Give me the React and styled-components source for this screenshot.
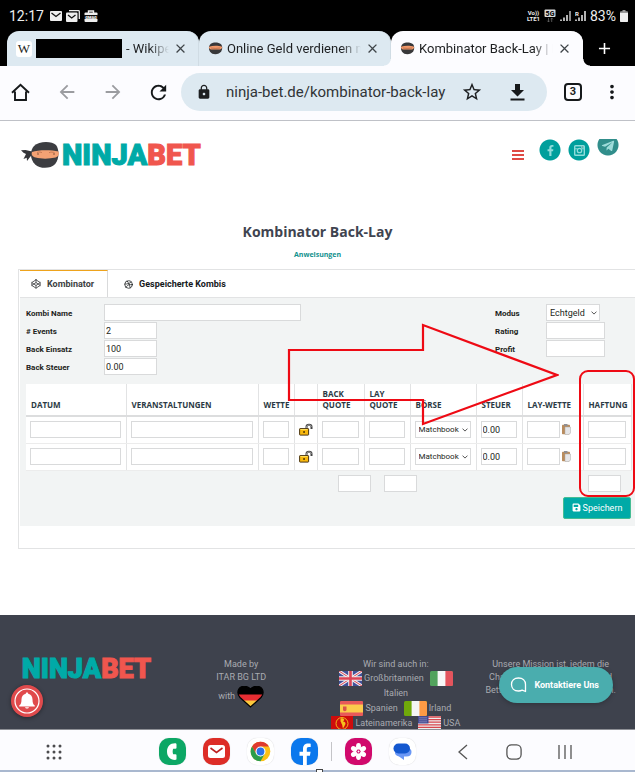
import { useState } from 'react';
import styled, { createGlobalStyle } from 'styled-components';
import { FaFacebookF, FaSave, FaTelegramPlane } from 'react-icons/fa';
import { FiCodepen, FiDribbble } from 'react-icons/fi';
import {
  MdAdd,
  MdArrowBack,
  MdArrowForward,
  MdClose,
  MdLock,
  MdMoreVert,
  MdRefresh,
  MdStarBorder,
} from 'react-icons/md';

const colors = {
  teal: '#00aaa7',
  coral: '#f0564e',
  ink: '#3f4450',
  border: '#d9dadb',
  surface: '#f2f4f4',
  tab: '#dde9f1',
  red: '#ee0a14',
};

const COLUMNS = [
  { label: 'Datum', width: 100 },
  { label: 'Veranstaltungen', width: 132 },
  { label: 'Wette', width: 36 },
  { label: '', width: 23 },
  { label: 'Back Quote', width: 47 },
  { label: 'Lay Quote', width: 46 },
  { label: 'Börse', width: 66 },
  { label: 'Steuer', width: 46 },
  { label: 'Lay-Wette', width: 61 },
  { label: 'Haftung', width: 48 },
];

export default function App() {
  return (
    <>
      <GlobalStyle />
      <Screen>
        <StatusBar />
        <BrowserTabs />
        <AddressBar />
        <Main>
          <SiteHeader />
          <Title>Kombinator Back-Lay</Title>
          <Instructions href="#anweisungen">Anweisungen</Instructions>
          <Calculator />
        </Main>
        <SiteFooter />
        <SystemDock />
      </Screen>
    </>
  );
}

function StatusBar() {
  return (
    <Status>
      <Clock>12:17</Clock>
      <StatusIcons>
        <svg width="12" height="10" viewBox="0 0 12 10">
          <rect width="12" height="10" rx="1" fill="#eee" />
          <path d="M1.5 2 6 5.5 10.5 2" fill="none" stroke="#111" strokeWidth="1.3" />
        </svg>
        <svg width="14" height="12" viewBox="0 0 14 12">
          <path d="M3 .7h9.5a.8.8 0 0 1 .8.8V9" fill="none" stroke="#eee" strokeWidth="1.3" />
          <rect y="2.5" width="11.5" height="9.5" rx="1" fill="#eee" />
          <path d="m2 5 3.7 3L9.5 5" fill="none" stroke="#111" strokeWidth="1.3" />
        </svg>
        <svg width="14" height="12" viewBox="0 0 14 12">
          <path d="M4.5 3V1h5v2" fill="none" stroke="#eee" strokeWidth="1.4" />
          <rect x=".5" y="2.5" width="13" height="9.5" rx="1" fill="#eee" />
          <path d="M0 5h14v4H0z" fill="#111" />
          <text x="7" y="8.6" textAnchor="middle" fontSize="4" fontWeight="900" fill="#fff">GMAG</text>
        </svg>
      </StatusIcons>
      <StatusRight>
        <Carrier>
          <span>Vo))</span>
          <span>LTE1</span>
        </Carrier>
        <svg width="12" height="14" viewBox="0 0 12 14">
          <rect x=".5" y=".5" width="11" height="7.500" rx="1" fill="#ddd" />
          <text x="6" y="7" textAnchor="middle" fontSize="7" fontWeight="900" fill="#111">5G</text>
          <path d="M4.500 9v4M3.300 11.700 4.500 13l1.200-1.300M7.700 13V9M6.500 10.300 7.700 9l1.200 1.300" fill="none" stroke="#666" strokeWidth=".8" />
        </svg>
        <Signal />
        <Signal roaming />
        <span>83%</span>
        <svg width="8" height="12" viewBox="0 0 8 12">
          <path d="M2.500 0h3v1.300H7a1 1 0 0 1 1 1V11a1 1 0 0 1-1 1H1a1 1 0 0 1-1-1V2.300a1 1 0 0 1 1-1h1.500z" fill="#999" />
          <path d="M0 3h8v8a1 1 0 0 1-1 1H1a1 1 0 0 1-1-1z" fill="#eee" />
        </svg>
      </StatusRight>
    </Status>
  );
}

function Signal({ roaming }) {
  return (
    <svg width="11" height="12" viewBox="0 0 11 12">
      <path d="M1 9.500V11M4 7.500V11M7 5V11" stroke="#eee" strokeWidth="1.500" />
      <path d="M10 1v10" stroke={roaming ? '#eee' : '#bbb'} strokeWidth="1.500" />
      {roaming && <text x="0" y="5.500" fontSize="6" fontWeight="700" fill="#eee">R</text>}
    </svg>
  );
}

function BrowserTabs() {
  return (
    <TabStrip>
      <BrowserTab>
        <WikiIcon>W</WikiIcon>
        <Redacted />
        <TabText>- Wikipedia</TabText>
        <TabClose aria-label="Tab schließen">
          <MdClose size={15} />
        </TabClose>
      </BrowserTab>
      <BrowserTab>
        <NinjaFavicon />
        <TabText>Online Geld verdienen mit</TabText>
        <TabClose aria-label="Tab schließen">
          <MdClose size={15} />
        </TabClose>
      </BrowserTab>
      <BrowserTab $active>
        <NinjaFavicon />
        <TabText>Kombinator Back-Lay | Ninja</TabText>
        <TabClose aria-label="Tab schließen">
          <MdClose size={15} />
        </TabClose>
      </BrowserTab>
      <NewTab aria-label="Neuer Tab">
        <MdAdd size={19} />
      </NewTab>
    </TabStrip>
  );
}

function NinjaFavicon() {
  return (
    <svg width="15" height="13" viewBox="0 0 16 13">
      <path d="M3 1.500C6-.4 11-.3 14 2c1.500 2 1.500 5 .2 7.500-2.500 4-9.500 4.300-12 .5C.6 7.500.3 4 3 1.500z" fill="#38383a" />
      <path d="M1 4.500C5 3.300 11 3.300 15 4.500c.5 2-1.500 3-3.500 3h-7C2.500 7.500.5 6.500 1 4.500z" fill="#f39a6b" />
      <path d="M3 6c3 .5 7 .5 10 0" stroke="#a55f40" strokeWidth=".7" fill="none" />
    </svg>
  );
}

function AddressBar() {
  return (
    <Toolbar>
      <ToolButton aria-label="Startseite">
        <svg width="19" height="19" viewBox="0 0 19 19">
          <path d="M4 8.500V17h11V8.500M1 9.800 9.500 1.700 18 9.800" fill="none" stroke="#16191b" strokeWidth="1.900" />
        </svg>
      </ToolButton>
      <ToolButton aria-label="Zurück" $muted>
        <MdArrowBack size={22} />
      </ToolButton>
      <ToolButton aria-label="Vor" $muted>
        <MdArrowForward size={22} />
      </ToolButton>
      <ToolButton aria-label="Neu laden">
        <MdRefresh size={23} />
      </ToolButton>
      <Omnibox>
        <MdLock size={16} />
        <Url aria-label="Adresse" defaultValue="ninja-bet.de/kombinator-back-lay" />
        <OmniButton aria-label="Lesezeichen">
          <MdStarBorder size={22} />
        </OmniButton>
        <OmniButton aria-label="Herunterladen">
          <svg width="15" height="17" viewBox="0 0 15 17">
            <path d="M5 0h5v6h4L7.500 12.500 1 6h4zM.5 14.500h14v2H.5z" fill="#16191b" />
          </svg>
        </OmniButton>
      </Omnibox>
      <TabCount aria-label="Offene Tabs">3</TabCount>
      <ToolButton aria-label="Menü">
        <MdMoreVert size={22} />
      </ToolButton>
    </Toolbar>
  );
}

function SiteHeader() {
  return (
    <Header>
      <Brand href="#start">
        <svg width="40" height="28" viewBox="0 0 40 28">
          <path d="M12 10.500 5.500 9 1 9.300l2.500 2.500L6 13l-2.500 5 3.200-1.200L7 20l5-6.500z" fill="#343539" />
          <path d="M14 5C19-.2 32-.1 36 4c3.600 5 3.200 14-.8 19-5 5.300-15.500 4.800-20 .5C9.500 18 10 9.500 14 5z" fill="#3c3d41" />
          <path d="M12 11c6-2.300 19-2.400 26.500-.4 1 2.600 0 5-2.800 6-6.700 1.500-14.700 1.500-20 0C12.500 15.700 11 13.500 12 11z" fill="#f4a274" />
          <path d="M17 11.500c2-.8 4-.5 5 .2M29 11.700c1.500-.8 4-.7 5.500 0" stroke="#c77b55" fill="none" />
          <circle cx="18" cy="13" r=".8" fill="#7a4d38" />
          <circle cx="34" cy="13" r=".8" fill="#7a4d38" />
        </svg>
        <Wordmark>
          NINJA<em>BET</em>
        </Wordmark>
      </Brand>
      <MenuButton aria-label="Navigation">
        <svg width="12" height="10" viewBox="0 0 12 10">
          <path d="M0 1h12M0 5h12M0 9h12" stroke="#df4a44" strokeWidth="2" />
        </svg>
      </MenuButton>
      <Socials>
        <Social href="#facebook" aria-label="Facebook">
          <FaFacebookF size={11} />
        </Social>
        <Social href="#instagram" aria-label="Instagram">
          <svg width="11" height="11" viewBox="0 0 11 11">
            <rect x=".7" y=".7" width="9.600" height="9.600" rx=".8" fill="none" stroke="currentColor" strokeWidth="1.400" />
            <path d="M1 3.800h2.500M7.500 3.800H10M7.600 1.200h1.800v1.600H7.600z" stroke="currentColor" />
            <circle cx="5.500" cy="5.500" r="2.200" fill="none" stroke="currentColor" strokeWidth="1.300" />
          </svg>
        </Social>
        <Social href="#telegram" aria-label="Telegram" $cut>
          <FaTelegramPlane size={14} />
        </Social>
      </Socials>
    </Header>
  );
}

function Calculator() {
  const [tab, setTab] = useState('kombinator');

  return (
    <Panel>
      <PanelTabs role="tablist">
        <PanelTab
          role="tab"
          aria-selected={tab === 'kombinator'}
          $active={tab === 'kombinator'}
          onClick={() => setTab('kombinator')}
        >
          <FiCodepen size={10} /> Kombinator
        </PanelTab>
        <PanelTab
          role="tab"
          aria-selected={tab === 'kombis'}
          $active={tab === 'kombis'}
          onClick={() => setTab('kombis')}
        >
          <FiDribbble size={9} /> Gespeicherte Kombis
        </PanelTab>
      </PanelTabs>
      <PanelBody>
        <Settings>
          <Fields>
            <label htmlFor="name">Kombi Name</label>
            <Field id="name" $width={197} />
            <label htmlFor="events"># Events</label>
            <Field id="events" $width={53} defaultValue="2" />
            <label htmlFor="einsatz">Back Einsatz</label>
            <Field id="einsatz" $width={53} defaultValue="100" />
            <label htmlFor="steuer">Back Steuer</label>
            <Field id="steuer" $width={53} defaultValue="0.00" />
          </Fields>
          <Fields $compact>
            <label htmlFor="modus">Modus</label>
            <SelectBox $width={54}>
              <select id="modus" defaultValue="Echtgeld">
                <option>Echtgeld</option>
              </select>
              <Chevron />
            </SelectBox>
            <label htmlFor="rating">Rating</label>
            <Field id="rating" $width={59} />
            <label htmlFor="profit">Profit</label>
            <Field id="profit" $width={59} />
          </Fields>
        </Settings>
        <BetTable>
          <colgroup>
            {COLUMNS.map((col, i) => (
              <col key={i} width={col.width} />
            ))}
          </colgroup>
          <thead>
            <tr>
              {COLUMNS.map((col, i) => (
                <th key={i} scope="col">{col.label}</th>
              ))}
            </tr>
          </thead>
          <tbody>
            <BetRow number={1} />
            <BetRow number={2} />
          </tbody>
        </BetTable>
        <Totals>
          <Field aria-label="Back Quote gesamt" $width={33} />
          <Field aria-label="Lay Quote gesamt" $width={33} />
          <Field aria-label="Haftung gesamt" $width={33} />
        </Totals>
        <Actions>
          <SaveButton>
            <FaSave size={9} /> Speichern
          </SaveButton>
        </Actions>
      </PanelBody>
      <Arrow width="272" height="104" viewBox="0 0 272 104">
        <path d="M2 27h134V2l134 50-134 49V77H2z" fill="none" stroke={colors.red} strokeWidth="2.200" />
      </Arrow>
      <Highlight />
    </Panel>
  );
}

function BetRow({ number }) {
  return (
    <tr>
      <td><Field aria-label={`Datum ${number}`} /></td>
      <td><Field aria-label={`Veranstaltung ${number}`} /></td>
      <td><Field aria-label={`Wette ${number}`} /></td>
      <td>
        <IconButton aria-label={`Wette ${number} sperren`}>
          <svg width="14" height="13" viewBox="0 0 14 13">
            <path d="M7.500 6V3.800C7.500 1 12.500 1 12.500 3.800V6" fill="none" stroke="#444" strokeWidth="2" />
            <path d="M7.600 5V3.800C7.800 1.400 12.300 1.400 12.400 3.800" fill="none" stroke="#b8b8b8" strokeWidth=".8" />
            <rect x=".6" y="5.600" width="9" height="6.500" rx=".5" fill="#f8b80e" stroke="#4a3513" strokeWidth="1" />
            <path d="M1.500 6.500h7" stroke="#ffe05a" />
            <rect x="4.300" y="8" width="1.500" height="2" fill="#553800" />
          </svg>
        </IconButton>
      </td>
      <td><Field aria-label={`Back Quote ${number}`} /></td>
      <td><Field aria-label={`Lay Quote ${number}`} /></td>
      <td>
        <SelectBox $small>
          <select aria-label={`Börse ${number}`} defaultValue="Matchbook">
            <option>Matchbook</option>
          </select>
          <Chevron />
        </SelectBox>
      </td>
      <td><Field aria-label={`Steuer ${number}`} defaultValue="0.00" /></td>
      <td>
        <LayCell>
          <Field aria-label={`Lay-Wette ${number}`} $width={33} />
          <IconButton aria-label={`Lay-Wette ${number} kopieren`}>
            <svg width="9" height="11" viewBox="0 0 9 11">
              <rect y=".7" width="8" height="9.500" rx=".7" fill="#b98c5e" />
              <rect x="2" width="3.500" height="2" fill="#8f8f93" />
              <path d="M3 3h5.500v6l-1.500 1.500H3z" fill="#e6e6e8" stroke="#aaa" strokeWidth=".5" />
            </svg>
          </IconButton>
        </LayCell>
      </td>
      <td><Field aria-label={`Haftung ${number}`} /></td>
    </tr>
  );
}

function Chevron() {
  return (
    <svg width="6" height="4" viewBox="0 0 6 4">
      <path d="m.5.600 2.500 2.500L5.500.600" fill="none" stroke="#555" />
    </svg>
  );
}

function SiteFooter() {
  return (
    <Footer>
      <FooterGrid>
        <Wordmark $footer>
          NINJA<em>BET</em>
        </Wordmark>
        <FooterText>
          Made by
          <br />
          ITAR BG LTD
          <MadeWith>
            with
            <svg width="27" height="22" viewBox="0 0 27 22">
              <clipPath id="heart">
                <path d="M13.500 3C10-.7 4-.6 1.800 3 .2 6 .9 9 3 11.500L13.500 21 24 11.500c2.100-2.500 2.800-5.500 1.200-8.500C23-.6 17-.7 13.500 3z" />
              </clipPath>
              <g clipPath="url(#heart)">
                <path d="M0 0h27v9H0z" fill="#000" />
                <path d="M0 8.500h27V15H0z" fill="#e62d32" />
                <path d="M0 14.500h27V22H0z" fill="#fbc93d" />
              </g>
              <path d="M13.500 3C10-.7 4-.6 1.800 3 .2 6 .9 9 3 11.500L13.500 21 24 11.500c2.100-2.500 2.800-5.500 1.200-8.500C23-.6 17-.7 13.500 3z" fill="none" stroke="#000" strokeWidth="1.200" />
            </svg>
          </MadeWith>
        </FooterText>
        <FooterText>
          Wir sind auch in:
          <Country>
            <a href="#uk"><UkFlag /> Großbritannien</a>
            <StripeFlag bands={['#52a35d', '#f7f7f7', '#e4545d']} />
          </Country>
          <Country><a href="#it">Italien</a></Country>
          <Country>
            <a href="#es"><SpainFlag /> Spanien</a>
            <a href="#ie"><StripeFlag bands={['#70a90a', '#f5f5f5', '#fc9a45']} /> Irland</a>
          </Country>
          <Country>
            <a href="#lat"><LatinFlag /> Lateinamerika</a>
            <a href="#us"><UsFlag /> USA</a>
          </Country>
        </FooterText>
        <FooterText>
          Unsere Mission ist, jedem die
          <br />
          Chance zu geben, mit Matched
          <br />
          Betting online Geld zu verdienen.
        </FooterText>
      </FooterGrid>
      <BellButton aria-label="Benachrichtigungen">
        <svg width="32" height="32" viewBox="0 0 32 32">
          <circle cx="16" cy="16" r="16" fill="#e04a4c" />
          <circle cx="16" cy="16" r="12" fill="none" stroke="#fff" strokeWidth="1.200" />
          <path d="M16 7.500c.9 0 1.200.6 1.200 1.200 2.800.6 4.300 3 4.300 5.800 0 3.500.8 5 2.300 6v1H8.200v-1c1.500-1 2.300-2.500 2.300-6 0-2.800 1.500-5.200 4.300-5.800 0-.6.3-1.200 1.200-1.200z" fill="#fff" />
          <path d="M14 22.300h4c-.3 1.600-3.700 1.600-4 0z" fill="#fff" />
        </svg>
      </BellButton>
      <ChatButton>
        <svg width="17" height="16" viewBox="0 0 17 16">
          <path d="M15.500 14.500v-7c0-4-2.800-6.500-7-6.500s-7 2.600-7 6.500 2.800 6.500 7 6.500c1.500 0 2.700-.3 3.700-.8l3.300 1.300z" fill="none" stroke="#fff" strokeWidth="1.300" strokeLinejoin="round" />
        </svg>
        Kontaktiere Uns
      </ChatButton>
    </Footer>
  );
}

function StripeFlag({ bands }) {
  return (
    <svg width="23" height="15" viewBox="0 0 23 15">
      <rect width="23" height="15" rx="1.500" fill={bands[0]} />
      <path d="M15 0h6.500A1.500 1.500 0 0 1 23 1.500v12a1.500 1.500 0 0 1-1.500 1.500H15z" fill={bands[2]} />
      <path d="M7.600 0h7.800v15H7.600z" fill={bands[1]} />
    </svg>
  );
}

function UkFlag() {
  return (
    <svg width="23" height="15" viewBox="0 0 23 15">
      <rect width="23" height="15" rx="1" fill="#41509a" />
      <path d="m0 0 23 15M23 0 0 15" stroke="#eee" strokeWidth="3" />
      <path d="m0 0 23 15M23 0 0 15" stroke="#dc4455" strokeWidth="1" />
      <path d="M11.500 0v15M0 7.500h23" stroke="#eee" strokeWidth="4.600" />
      <path d="M11.500 0v15M0 7.500h23" stroke="#dc4455" strokeWidth="2.600" />
    </svg>
  );
}

function SpainFlag() {
  return (
    <svg width="23" height="15" viewBox="0 0 23 15">
      <rect width="23" height="15" rx="1" fill="#e8595a" />
      <path d="M0 3.500h23v8H0z" fill="#fbcb4c" />
      <path d="M3 5.500h3.500v3.300c0 1.800-3.500 1.800-3.500 0z" fill="#d9534b" />
    </svg>
  );
}

function LatinFlag() {
  return (
    <svg width="22" height="15" viewBox="0 0 22 15">
      <path d="M0 0h22v15H0z" fill="#ce0c0c" />
      <circle cx="11" cy="7.500" r="6" fill="none" stroke="#f3b519" />
      <path d="M9.500 2.500c2-.5 3.500.2 3.800 1.500L12 5.500c2 .2 3 1.200 2.300 3-.8 1.500-1.600 3-2.300 3.800-.8-1.500-.3-3-1.300-4.500-.8-.9-.2-1.700-1.200-2.300z" fill="#f7c11c" />
    </svg>
  );
}

function UsFlag() {
  return (
    <svg width="23" height="15" viewBox="0 0 23 15">
      <path d="M0 0h23v15H0z" fill="#eee" />
      <path d="M0 1h23M0 3.600h23M0 6.200h23M0 8.800h23M0 11.400h23M0 14h23" stroke="#d7474e" strokeWidth="1.300" />
      <path d="M0 0h10.500v7.500H0z" fill="#454a91" />
      <path d="M1.500 1.800h8M1.500 3.800h8M1.500 5.800h8" stroke="#c8cae6" strokeWidth=".8" strokeDasharray="1 1" />
    </svg>
  );
}

function SystemDock() {
  return (
    <Dock>
      <DockButton aria-label="Alle Apps">
        <svg width="16" height="16" viewBox="0 0 16 16" fill="#4b4b4e">
          {[2, 8, 14].map((y) =>
            [2, 8, 14].map((x) => <circle key={`${x}-${y}`} cx={x} cy={y} r="1.500" />)
          )}
        </svg>
      </DockButton>
      <DockApps>
        <AppButton aria-label="Telefon" $fill="#0ca765">
          <svg width="27" height="27" viewBox="0 0 27 27">
            <path d="M17.500 6.500v3.300a1 1 0 0 1-1 1h-2.300c-.7 1.800-.7 3.700 0 5.500h2.300a1 1 0 0 1 1 1v3.400c0 .8-.5 1.200-1.500 1.200-5 0-8-3.500-8-8.400s3-8.300 8-8.300c1 0 1.500.5 1.500 1.300z" fill="#fff" />
          </svg>
        </AppButton>
        <AppButton aria-label="E-Mail" $fill="#dd2d27">
          <svg width="27" height="27" viewBox="0 0 27 27">
            <rect x="5" y="7" width="17" height="13" rx="2.500" fill="#fff" />
            <path d="m7.500 10 6 4.500 6-4.500" fill="none" stroke="#bd2020" strokeWidth="1.600" />
          </svg>
        </AppButton>
        <AppButton aria-label="Chrome" $fill="#fff">
          <svg width="27" height="27" viewBox="0 0 27 27">
            <circle cx="13.500" cy="13.500" r="9.800" fill="#fbc116" />
            <path d="M13.500 3.700A9.800 9.800 0 0 1 22 8.600h-8.500L9.200 16 5 8.600a9.800 9.800 0 0 1 8.500-4.900z" fill="#df3a2f" />
            <path d="M5 8.600 9.250 16 13.500 18.400 17.700 16 13.500 23.300A9.800 9.800 0 0 1 5 8.600z" fill="#2b9d4b" />
            <circle cx="13.500" cy="13.500" r="5" fill="#fff" />
            <circle cx="13.500" cy="13.500" r="3.900" fill="#2b73e8" />
          </svg>
        </AppButton>
        <AppButton aria-label="Facebook" $fill="#0b78ed">
          <svg width="27" height="27" viewBox="0 0 27 27">
            <path d="M12 27v-9.300H8.500v-4H12v-2.600C12 7.300 14 5.500 17.300 5.500c1 0 1.700.1 2.400.2v3.400h-1.800c-1.600 0-2.100.8-2.100 2v2.600h3.800l-.7 4h-3.100V27z" fill="#fff" />
          </svg>
        </AppButton>
        <DockDivider />
        <AppButton aria-label="Galerie" $fill="#d1096c">
          <svg width="27" height="27" viewBox="0 0 27 27">
            {[0, 60, 120, 180, 240, 300].map((deg) => (
              <ellipse key={deg} cx="13.500" cy="8.500" rx="2.500" ry="3.400" fill="#fff" transform={`rotate(${deg} 13.500 13.500)`} />
            ))}
            <circle cx="13.500" cy="13.500" r="2" fill="#d1096c" />
            <circle cx="13.500" cy="13.500" r="1" fill="#fff" />
          </svg>
        </AppButton>
        <AppButton aria-label="Nachrichten" $fill="#fff">
          <svg width="27" height="27" viewBox="0 0 27 27">
            <path d="M10 10h7.500c3 0 5 1 5 4s-2 4.500-5 4.500h-2.500V22L10 18.500c-3-.5-4.500-2.500-4-5z" fill="#6a97f5" />
            <rect x="4.500" y="5.500" width="16.500" height="10" rx="5" fill="#1458cf" />
          </svg>
        </AppButton>
      </DockApps>
      <DockNav>
        <DockButton aria-label="Zurück">
          <svg width="16" height="18" viewBox="0 0 16 18">
            <path d="m12 2-8 7 8 7" fill="none" stroke="#555" strokeWidth="1.300" />
          </svg>
        </DockButton>
        <DockButton aria-label="Home">
          <svg width="16" height="16" viewBox="0 0 16 16">
            <rect x=".9" y=".9" width="14.200" height="14.200" rx="4.500" fill="none" stroke="#555" strokeWidth="1.300" />
          </svg>
        </DockButton>
        <DockButton aria-label="Letzte Apps">
          <svg width="16" height="16" viewBox="0 0 16 16">
            <path d="M2 1v14M8 1v14M14 1v14" stroke="#555" strokeWidth="1.300" />
          </svg>
        </DockButton>
      </DockNav>
    </Dock>
  );
}

const GlobalStyle = createGlobalStyle`
  * {
    box-sizing: border-box;
  }

  body {
    margin: 0;
    font-family: Roboto, 'Liberation Sans', sans-serif;
    color: #1d1f21;
    background: #fff;
  }

  button, input, select {
    margin: 0;
    font-family: inherit;
    color: inherit;
  }

  button {
    padding: 0;
    border: 0;
    background: none;
    cursor: pointer;
  }

  a {
    color: inherit;
    text-decoration: none;
  }

  svg {
    display: block;
    flex: none;
  }
`;

const Screen = styled.div`
  display: flex;
  flex-direction: column;
  height: 100vh;
  overflow: hidden;
`;

const Status = styled.header`
  display: flex;
  align-items: center;
  flex: none;
  height: 31px;
  padding: 0 7px 0 9px;
  color: #eee;
  background: #000;
  font-size: 14px;
`;

const Clock = styled.time`
  margin-right: 6px;
`;

const StatusIcons = styled.div`
  display: flex;
  align-items: center;
  gap: 4px;
`;

const StatusRight = styled.div`
  display: flex;
  align-items: center;
  gap: 4px;
  margin-left: auto;
`;

const Carrier = styled.div`
  display: flex;
  flex-direction: column;
  align-items: center;
  font-size: 6px;
  font-weight: 700;
  line-height: 6px;
`;

const TabStrip = styled.nav`
  display: flex;
  flex: none;
  height: 35px;
  padding-left: 7px;
  background: #000;
`;

const BrowserTab = styled.div`
  position: relative;
  display: flex;
  align-items: center;
  gap: 4px;
  flex: 1 1 0;
  min-width: 0;
  padding: 0 11px 0 9px;
  border-radius: 12px 12px 0 0;
  background: ${({ $active }) => ($active ? '#fcfcff' : colors.tab)};
  box-shadow: inset -1px 0 0 ${({ $active }) => ($active ? '#fcfcff' : '#d0dce4')};

  &::before,
  &::after {
    content: ${({ $active }) => ($active ? "''" : 'none')};
    position: absolute;
    bottom: 0;
    width: 7px;
    height: 7px;
  }

  &::before {
    right: 100%;
    background: radial-gradient(circle at 0 0, transparent 6px, #fcfcff 7px);
  }

  &::after {
    left: 100%;
    background: radial-gradient(circle at 100% 0, transparent 6px, #fcfcff 7px);
  }
`;

const WikiIcon = styled.span`
  flex: none;
  width: 16px;
  border-radius: 3px;
  background: #fff;
  font-family: 'Liberation Serif', serif;
  font-size: 13px;
  line-height: 16px;
  text-align: center;
`;

const Redacted = styled.span`
  flex: none;
  width: 86px;
  height: 19px;
  background: #000;
`;

const TabText = styled.span`
  flex: 1;
  overflow: hidden;
  white-space: nowrap;
  font-size: 13px;
  mask-image: linear-gradient(to left, transparent, #000 20px);
`;

const TabClose = styled.button`
  color: #3f4549;
`;

const NewTab = styled.button`
  display: grid;
  place-items: center;
  width: 52px;
  padding-right: 10px;
  color: #fff;
`;

const Toolbar = styled.div`
  display: flex;
  align-items: center;
  flex: none;
  height: 55px;
  padding: 0 12px 2px 9px;
  border-bottom: 1px solid #bfc1c7;
  background: #fcfcff;
`;

const ToolButton = styled.button`
  display: grid;
  place-items: center;
  width: 23px;
  margin-right: 23px;
  color: ${({ $muted }) => ($muted ? '#9b9ca0' : '#16191b')};

  &:nth-child(4) {
    margin-right: 11px;
  }

  &:last-child {
    margin-right: 0;
  }
`;

const Omnibox = styled.div`
  display: flex;
  align-items: center;
  flex: 1;
  min-width: 0;
  height: 38px;
  padding: 0 22px 0 15px;
  border-radius: 19px;
  background: ${colors.tab};
`;

const Url = styled.input`
  flex: 1;
  min-width: 0;
  margin-left: 14px;
  padding: 0;
  border: 0;
  color: #303437;
  background: transparent;
  font-size: 15px;
`;

const OmniButton = styled.button`
  margin-left: 10px;

  & + & {
    margin-left: 27px;
  }
`;

const TabCount = styled.button`
  width: 18px;
  height: 18px;
  margin: 0 18px 0 17px;
  border: 2px solid #16191b;
  border-radius: 4px;
  font-size: 11px;
  font-weight: 700;
  line-height: 12px;
`;

const Main = styled.main`
  display: flex;
  flex-direction: column;
  flex: none;
  padding-bottom: 66px;
`;

const Header = styled.div`
  display: flex;
  align-items: flex-start;
  height: 100px;
  padding: 18px 16px 0 20px;
`;

const Brand = styled.a`
  display: flex;
  align-items: center;
  gap: 2px;
  margin-top: 1px;
`;

const Wordmark = styled.span`
  color: ${colors.teal};
  font-family: Roboto, 'Liberation Sans', sans-serif;
  font-size: ${({ $footer }) => ($footer ? 27 : 29)}px;
  font-weight: 900;
  line-height: 30px;
  text-align: center;
  -webkit-text-stroke: 1px currentColor;

  em {
    color: ${colors.coral};
    font-style: normal;
  }
`;

const MenuButton = styled.button`
  margin: 11px 15px 0 auto;
`;

const Socials = styled.div`
  display: flex;
  gap: 7px;
`;

const Social = styled.a`
  display: grid;
  place-items: center;
  width: 22px;
  height: ${({ $cut }) => ($cut ? 17 : 22)}px;
  padding-bottom: ${({ $cut }) => ($cut ? 5 : 0)}px;
  color: ${({ $cut }) => ($cut ? '#9fdcda' : '#8fdcda')};
  background: radial-gradient(
    circle at 11px ${({ $cut }) => ($cut ? 6 : 11)}px,
    ${({ $cut }) => ($cut ? '#318e8b' : '#009f9c')} 10px,
    transparent 11px
  );
`;

const Title = styled.h1`
  margin: 0;
  color: ${colors.ink};
  font-family: 'Open Sans', sans-serif;
  font-size: 14px;
  font-weight: 700;
  line-height: 22px;
  text-align: center;
`;

const Instructions = styled.a`
  margin: 6px auto 8px;
  color: #12918e;
  font-family: 'Open Sans', sans-serif;
  font-size: 7px;
  font-weight: 700;
  line-height: 12px;
`;

const Panel = styled.section`
  position: relative;
  margin-left: 18px;
  padding: 0 0 22px 1px;
  border: 1px solid #e2e3e4;
  border-right: 0;
`;

const PanelTabs = styled.div`
  display: flex;
  height: 28px;
  border-bottom: 1px solid #e2e3e4;
`;

const PanelTab = styled.button`
  display: flex;
  align-items: center;
  gap: 6px;
  padding: 0 13px 0 11px;
  border-top: 1px solid ${({ $active }) => ($active ? '#eea31c' : 'transparent')};
  border-right: 1px solid ${({ $active }) => ($active ? colors.border : 'transparent')};
  color: ${({ $active }) => ($active ? '#3d3f42' : '#16191b')};
  font-size: 9px;
  font-weight: 700;

  & + & {
    padding-left: 16px;
  }
`;

const PanelBody = styled.div`
  padding: 6px 4px 7px 6px;
  background: ${colors.surface};
`;

const Settings = styled.div`
  display: flex;
  justify-content: space-between;
  align-items: flex-start;
  padding-right: 26px;
`;

const Fields = styled.div`
  display: grid;
  grid-template-columns: ${({ $compact }) => ($compact ? 51 : 78)}px auto;
  row-gap: 1px;
  align-items: center;
  font-size: 8px;
  font-weight: 700;

  label {
    padding-top: 2px;
  }
`;

const Field = styled.input`
  display: block;
  width: ${({ $width }) => ($width ? `${$width}px` : '100%')};
  height: 17px;
  padding: 0 1px;
  border: 1px solid ${colors.border};
  background: #fff;
  font-size: 9px;
`;

const SelectBox = styled.div`
  position: relative;
  width: ${({ $width }) => ($width ? `${$width}px` : '100%')};

  select {
    display: block;
    width: 100%;
    height: 17px;
    padding: 0 0 0 3px;
    border: 1px solid ${colors.border};
    border-radius: 0;
    appearance: none;
    background: #fff;
    font-size: ${({ $small }) => ($small ? 8 : 9)}px;
    font-weight: 400;
  }

  svg {
    position: absolute;
    top: 7px;
    right: 3px;
    pointer-events: none;
  }
`;

const BetTable = styled.table`
  width: 100%;
  margin-top: 9px;
  border-collapse: collapse;
  table-layout: fixed;
  background: #fff;

  th {
    height: 32px;
    padding: 0 2px 5px 5px;
    border-right: 1px solid #e2e3e4;
    border-bottom: 2px solid #dcddde;
    color: #2b3a45;
    font-family: 'Open Sans', sans-serif;
    font-size: 8px;
    line-height: 11px;
    text-align: left;
    text-transform: uppercase;
    vertical-align: bottom;
  }

  td {
    height: 27px;
    padding: 0 5px 0 4px;
    border-right: 1px solid #e2e3e4;
    border-bottom: 1px solid #ececec;
  }
`;

const IconButton = styled.button`
  display: block;
`;

const LayCell = styled.div`
  display: flex;
  align-items: center;
  gap: 2px;
`;

const Totals = styled.div`
  display: flex;
  gap: 13px;
  margin-top: 4px;
  padding: 0 10px 0 51.5%;

  ${Field}:last-child {
    margin-left: auto;
  }
`;

const Actions = styled.div`
  display: flex;
  justify-content: flex-end;
  margin-top: 5px;
`;

const SaveButton = styled.button`
  display: flex;
  align-items: center;
  justify-content: center;
  gap: 2px;
  width: 68px;
  height: 22px;
  border: 1px solid #45bd94;
  border-radius: 2px;
  color: #fff;
  background: ${colors.teal};
  font-size: 9px;
`;

const Arrow = styled.svg`
  position: absolute;
  top: 53px;
  left: 268px;
  pointer-events: none;
`;

const Highlight = styled.div`
  position: absolute;
  top: 100px;
  right: 0;
  width: 56px;
  height: 127px;
  border: 2px solid ${colors.red};
  border-radius: 9px;
  pointer-events: none;
`;

const Footer = styled.footer`
  position: relative;
  flex: 1 1 0;
  min-height: 0;
  overflow: hidden;
  background: #3e424d;
`;

const FooterGrid = styled.div`
  display: grid;
  grid-template-columns: repeat(4, 1fr);
  padding: 43px 7px 0 9px;

  ${Wordmark} {
    margin-top: -4px;
  }
`;

const FooterText = styled.div`
  color: #a9abb1;
  font-size: 9px;
  line-height: 13px;
  text-align: center;
  white-space: nowrap;
`;

const MadeWith = styled.div`
  display: flex;
  align-items: center;
  justify-content: center;
  gap: 2px;
  margin-top: 2px;
`;

const Country = styled.div`
  display: flex;
  align-items: center;
  justify-content: center;
  gap: 6px;
  height: 15px;

  a {
    display: flex;
    align-items: center;
    gap: 2px;
  }
`;

const BellButton = styled.button`
  position: absolute;
  bottom: 12px;
  left: 11px;
  border-radius: 50%;
  box-shadow: 0 1px 4px rgba(0, 0, 0, 0.4);
`;

const ChatButton = styled.button`
  position: absolute;
  right: 22px;
  bottom: 26px;
  display: flex;
  align-items: center;
  gap: 7px;
  height: 36px;
  padding: 0 14px 0 11px;
  border-radius: 18px;
  color: #fff;
  background: #4aadae;
  box-shadow: 0 1px 5px rgba(0, 0, 0, 0.25);
  font-size: 9px;
  font-weight: 700;
`;

const Dock = styled.nav`
  position: relative;
  display: flex;
  align-items: center;
  flex: none;
  height: 43px;
  padding: 3px 62px 0 46px;
  border-top: 1px solid #8e9096;
  border-bottom: 2px solid #a9b8cf;
  background: #fcfcff;

  &::after {
    content: '';
    position: absolute;
    bottom: -2px;
    left: 50%;
    width: 5px;
    height: 2px;
    margin-left: -2px;
    border: 1px solid #444;
    border-bottom: 0;
    background: #fff;
  }
`;

const DockButton = styled.button`
  display: block;
`;

const DockApps = styled.div`
  display: flex;
  align-items: center;
  gap: 17px;
  margin-left: 97px;
`;

const AppButton = styled.button`
  width: 27px;
  height: 27px;
  border-radius: 10px;
  background: ${({ $fill }) => $fill};
  box-shadow: 0 0 1px rgba(0, 0, 0, 0.2);
`;

const DockDivider = styled.span`
  width: 1px;
  height: 19px;
  margin: 0 -4px;
  background: #c4c4c8;
`;

const DockNav = styled.div`
  display: flex;
  align-items: center;
  gap: 35px;
  margin-left: auto;
`;
